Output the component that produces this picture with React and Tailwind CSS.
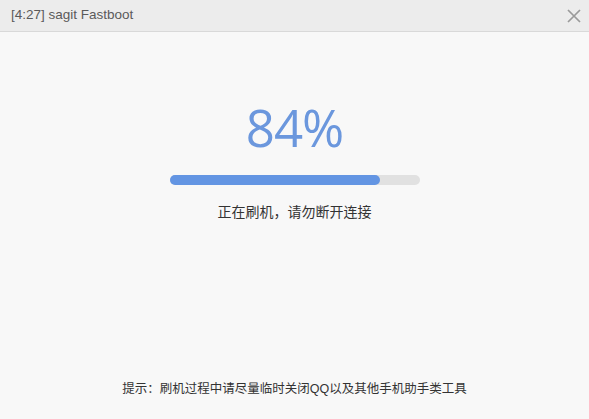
export default function App() {
  const percent = 84

  return (
    <div
      className="w-[589px] h-[419px] flex flex-col bg-[#f8f8f8] overflow-hidden"
      style={{ fontFamily: '"Liberation Sans", "Noto Sans CJK SC", sans-serif' }}
    >
      {/* title bar */}
      <div className="h-[32px] shrink-0 flex items-center justify-between pl-[11px] pr-[8px] bg-[#ececec] border-b border-[#d9d9d9]">
        <span className="text-[13.5px] text-[#5a5a5a]">[4:27] sagit Fastboot</span>
        <svg width="14" height="14" viewBox="0 0 14 14">
          <path d="M1 1L13 13M13 1L1 13" stroke="#9a9a9a" strokeWidth="1.7" />
        </svg>
      </div>

      {/* body */}
      <div className="flex-1 flex flex-col items-center">
        <div className="mt-[64px] h-[62px] flex items-center text-[51px] leading-none text-[#6b97dd] font-['Open_Sans',sans-serif] font-normal tracking-[-1px]">
          {percent}%
        </div>
        <div className="mt-[17px] w-[250px] h-[10px] rounded-full bg-[#e1e1e1]">
          <div className="h-full rounded-full bg-[#6395e3]" style={{ width: `${percent}%` }} />
        </div>
        <div className="mt-[17px] text-[14px] text-[#333]">正在刷机，请勿断开连接</div>

        <div className="mt-auto mb-[20px] text-[12.5px] text-[#333]">
          提示：刷机过程中请尽量临时关闭QQ以及其他手机助手类工具
        </div>
      </div>
    </div>
  )
}
